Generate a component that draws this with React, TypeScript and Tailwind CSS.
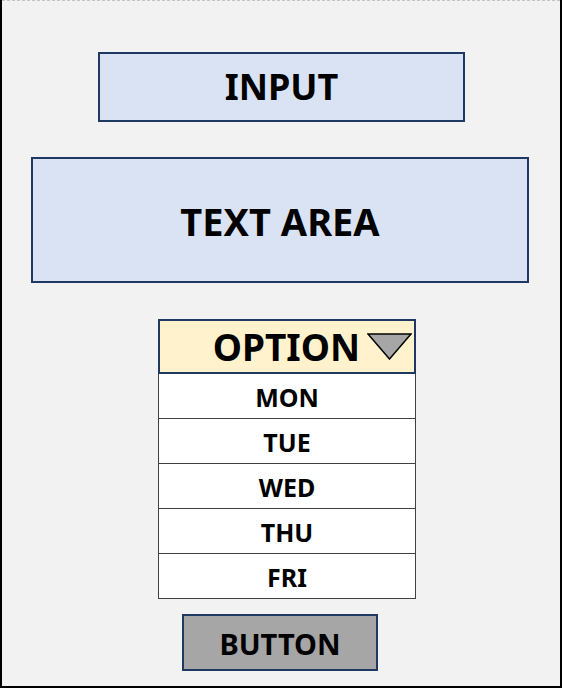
import React from 'react';

const days = ['MON', 'TUE', 'WED', 'THU', 'FRI'];

const font = { fontFamily: '"Noto Sans", "Open Sans", sans-serif' };

const App: React.FC = () => {
  return (
    <div
      className="w-[562px] h-[688px] bg-[#f2f2f2] border-l-2 border-r-2 border-b-2 border-black flex flex-col text-black"
      style={font}
    >
      <div className="h-0 border-t border-dashed border-[#c4c4c4]" />

      {/* input */}
      <div className="mt-[51px] ml-[96px] w-[367px] h-[70px] bg-[#dae3f3] border-2 border-[#203864] flex items-center justify-center">
        <span className="text-[36px] font-bold leading-none">INPUT</span>
      </div>

      {/* text area */}
      <div className="mt-[35px] ml-[29px] w-[498px] h-[126px] bg-[#dae3f3] border-2 border-[#203864] flex items-center justify-center">
        <span className="text-[38px] font-bold leading-none pt-[2px]">TEXT AREA</span>
      </div>

      {/* select */}
      <div className="mt-[36px] ml-[156px] w-[258px] flex flex-col">
        <div className="h-[55px] bg-[#fff2cc] border-2 border-[#203864] flex items-center justify-end gap-[7px] pr-[2px]">
          <span className="text-[37px] font-bold leading-none">OPTION</span>
          <svg width="45" height="27" viewBox="0 0 45 27">
            <polygon points="1,1 44,1 22.5,26" fill="#a6a6a6" stroke="#000" strokeWidth="1.5" />
          </svg>
        </div>
        {days.map((d) => (
          <div
            key={d}
            className="h-[45px] bg-white border border-t-0 border-[#404040] flex items-center justify-center pt-[3px]"
          >
            <span className="text-[25px] font-bold leading-none">{d}</span>
          </div>
        ))}
      </div>

      {/* button */}
      <div className="mt-[15px] ml-[180px] w-[196px] h-[57px] bg-[#a6a6a6] border-2 border-[#203864] flex items-center justify-center">
        <span className="text-[29px] font-bold leading-none pt-[1px]">BUTTON</span>
      </div>
    </div>
  );
};

export default App;
